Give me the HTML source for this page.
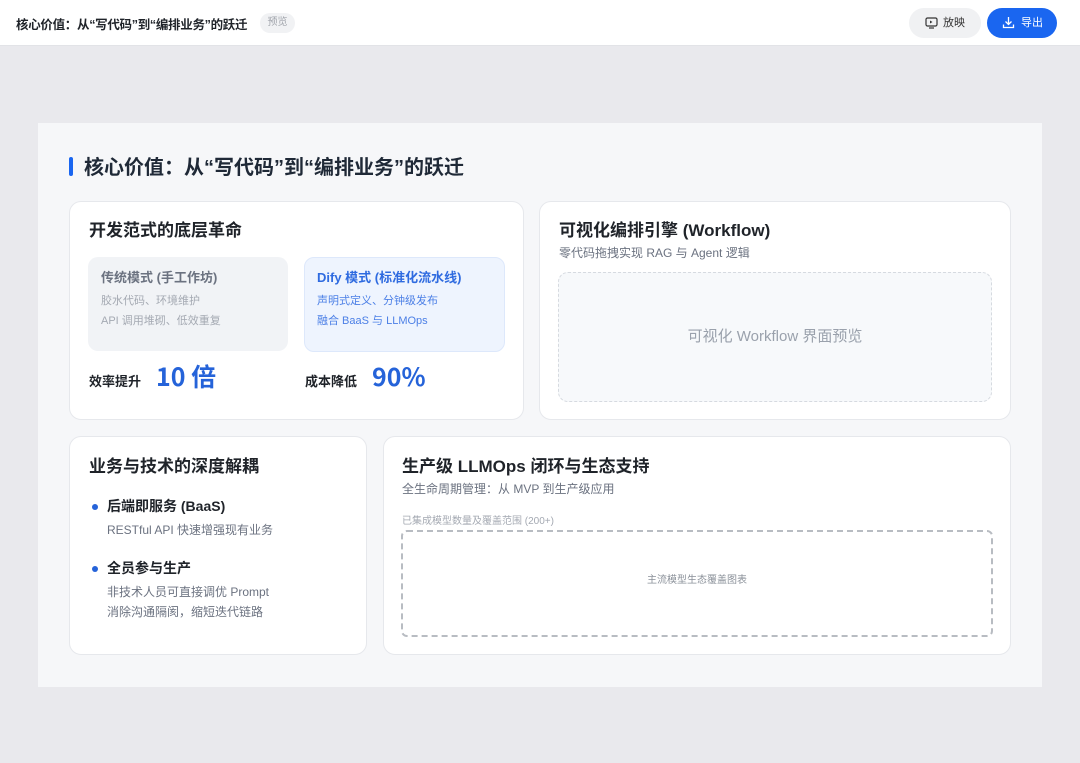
<!DOCTYPE html>
<html><head><meta charset="utf-8"><style>
*{margin:0;padding:0;box-sizing:border-box}
body{width:1080px;height:763px;background:#e9e9ed;font-family:"Liberation Sans","Noto Sans CJK SC",sans-serif;position:relative;overflow:hidden;color:#1f2329}
.a{position:absolute}
.hdr{left:0;top:0;width:1080px;height:46px;background:#fff;border-bottom:1px solid #e2e3e7}
.card{position:absolute;background:#fff;border:1px solid #e6e8ec;border-radius:12px}
.h{position:absolute;font-size:17px;font-weight:bold;color:#1f2329;white-space:nowrap}
.s{position:absolute;font-size:12px;color:#6b7280;white-space:nowrap}
.num{position:absolute;font-size:25px;font-weight:bold;color:#2563d9;white-space:nowrap;line-height:34px;font-family:"Noto Sans CJK SC","Liberation Sans",sans-serif}
</style></head><body>
<div class="a hdr">
 <div class="a" style="left:16px;top:14px;font-size:12.5px;font-weight:bold;color:#1f2329;white-space:nowrap;letter-spacing:-0.3px">核心价值：从“写代码”到“编排业务”的跃迁</div>
 <div class="a" style="left:260px;top:13px;width:35px;height:20px;border-radius:10px;background:#f1f2f4;color:#a0a4ab;font-size:10px;line-height:20px;text-align:center">预览</div>
 <div class="a" style="left:909px;top:8px;width:72px;height:30px;border-radius:15px;background:#f0f1f3;font-size:11px;line-height:30px;color:#333">
  <svg class="a" style="left:16px;top:9px" width="13" height="12" viewBox="0 0 13 12"><rect x="1" y="1" width="11" height="8" rx="1.5" fill="none" stroke="#333" stroke-width="1.2"/><path d="M5 3.5v3l2.5-1.5z" fill="#333"/><path d="M4 11h5" stroke="#333" stroke-width="1.2"/></svg>
  <span class="a" style="left:34px;top:0">放映</span></div>
 <div class="a" style="left:987px;top:8px;width:70px;height:30px;border-radius:15px;background:#1a66f0;font-size:11px;line-height:30px;color:#fff">
  <svg class="a" style="left:15px;top:8px" width="13" height="13" viewBox="0 0 13 13"><path d="M6.5 1v7M3.5 5.5l3 3 3-3M1.5 8.5v3h10v-3" fill="none" stroke="#fff" stroke-width="1.3"/></svg>
  <span class="a" style="left:34px;top:0">导出</span></div>
</div>
<div class="a" style="left:38px;top:123px;width:1004px;height:564px;background:#f6f7f9"></div>
<div class="a" style="left:69px;top:157px;width:4px;height:19px;border-radius:2px;background:#1a66f0"></div>
<div class="a" style="left:84px;top:151px;font-size:20px;font-weight:bold;color:#1f2937;white-space:nowrap">核心价值：从“写代码”到“编排业务”的跃迁</div>

<div class="card" style="left:69px;top:201px;width:455px;height:219px">
 <div class="h" style="left:19px;top:14px">开发范式的底层革命</div>
 <div class="a" style="left:18px;top:55px;width:200px;height:94px;border-radius:10px;background:#f1f3f6">
  <div class="a" style="left:13px;top:10px;font-size:13px;font-weight:bold;color:#6b7280;white-space:nowrap">传统模式 (手工作坊)</div>
  <div class="a" style="left:13px;top:34px;font-size:11px;color:#a4a9b2;line-height:20px;white-space:nowrap">胶水代码、环境维护<br>API 调用堆砌、低效重复</div>
 </div>
 <div class="a" style="left:234px;top:55px;width:201px;height:95px;border-radius:10px;background:#eef4fe;border:1px solid #dde8fb">
  <div class="a" style="left:12px;top:9px;font-size:13px;font-weight:bold;color:#2f6be0;white-space:nowrap">Dify 模式 (标准化流水线)</div>
  <div class="a" style="left:12px;top:33px;font-size:11px;color:#4b7fe6;line-height:20px;white-space:nowrap">声明式定义、分钟级发布<br>融合 BaaS 与 LLMOps</div>
 </div>
 <div class="a" style="left:19px;top:169px;font-size:13px;font-weight:bold;white-space:nowrap">效率提升</div>
 <div class="num" style="left:86px;top:157px">10 倍</div>
 <div class="a" style="left:235px;top:169px;font-size:13px;font-weight:bold;white-space:nowrap">成本降低</div>
 <div class="num" style="left:302px;top:157px">90%</div>
</div>

<div class="card" style="left:539px;top:201px;width:472px;height:219px">
 <div class="h" style="left:19px;top:14px">可视化编排引擎 (Workflow)</div>
 <div class="s" style="left:19px;top:42px">零代码拖拽实现 RAG 与 Agent 逻辑</div>
 <div class="a" style="left:18px;top:70px;width:434px;height:130px;border:1px dashed #d6dae0;border-radius:10px;background:#f7f9fb;text-align:center;line-height:128px;font-size:15px;color:#9aa1ac">可视化 Workflow 界面预览</div>
</div>

<div class="card" style="left:69px;top:436px;width:298px;height:219px">
 <div class="h" style="left:19px;top:15px">业务与技术的深度解耦</div>
 <div class="a" style="left:22px;top:67px;width:6px;height:6px;border-radius:3px;background:#2563d9"></div>
 <div class="a" style="left:37px;top:59px;font-size:14px;font-weight:bold;white-space:nowrap">后端即服务 (BaaS)</div>
 <div class="s" style="left:37px;top:84px">RESTful API 快速增强现有业务</div>
 <div class="a" style="left:22px;top:129px;width:6px;height:6px;border-radius:3px;background:#2563d9"></div>
 <div class="a" style="left:37px;top:121px;font-size:14px;font-weight:bold;white-space:nowrap">全员参与生产</div>
 <div class="s" style="left:37px;top:145px;line-height:20px">非技术人员可直接调优 Prompt<br>消除沟通隔阂，缩短迭代链路</div>
</div>

<div class="card" style="left:383px;top:436px;width:628px;height:219px">
 <div class="h" style="left:18px;top:15px">生产级 LLMOps 闭环与生态支持</div>
 <div class="s" style="left:18px;top:43px">全生命周期管理：从 MVP 到生产级应用</div>
 <div class="a" style="left:18px;top:75px;font-size:10px;color:#a4a9b2;white-space:nowrap">已集成模型数量及覆盖范围 (200+)</div>
 <div class="a" style="left:17px;top:93px;width:592px;height:107px;border:2px dashed #b8bcc2;border-radius:6px;text-align:center;line-height:97px;font-size:10px;color:#8a9099">主流模型生态覆盖图表</div>
</div>
</body></html>
